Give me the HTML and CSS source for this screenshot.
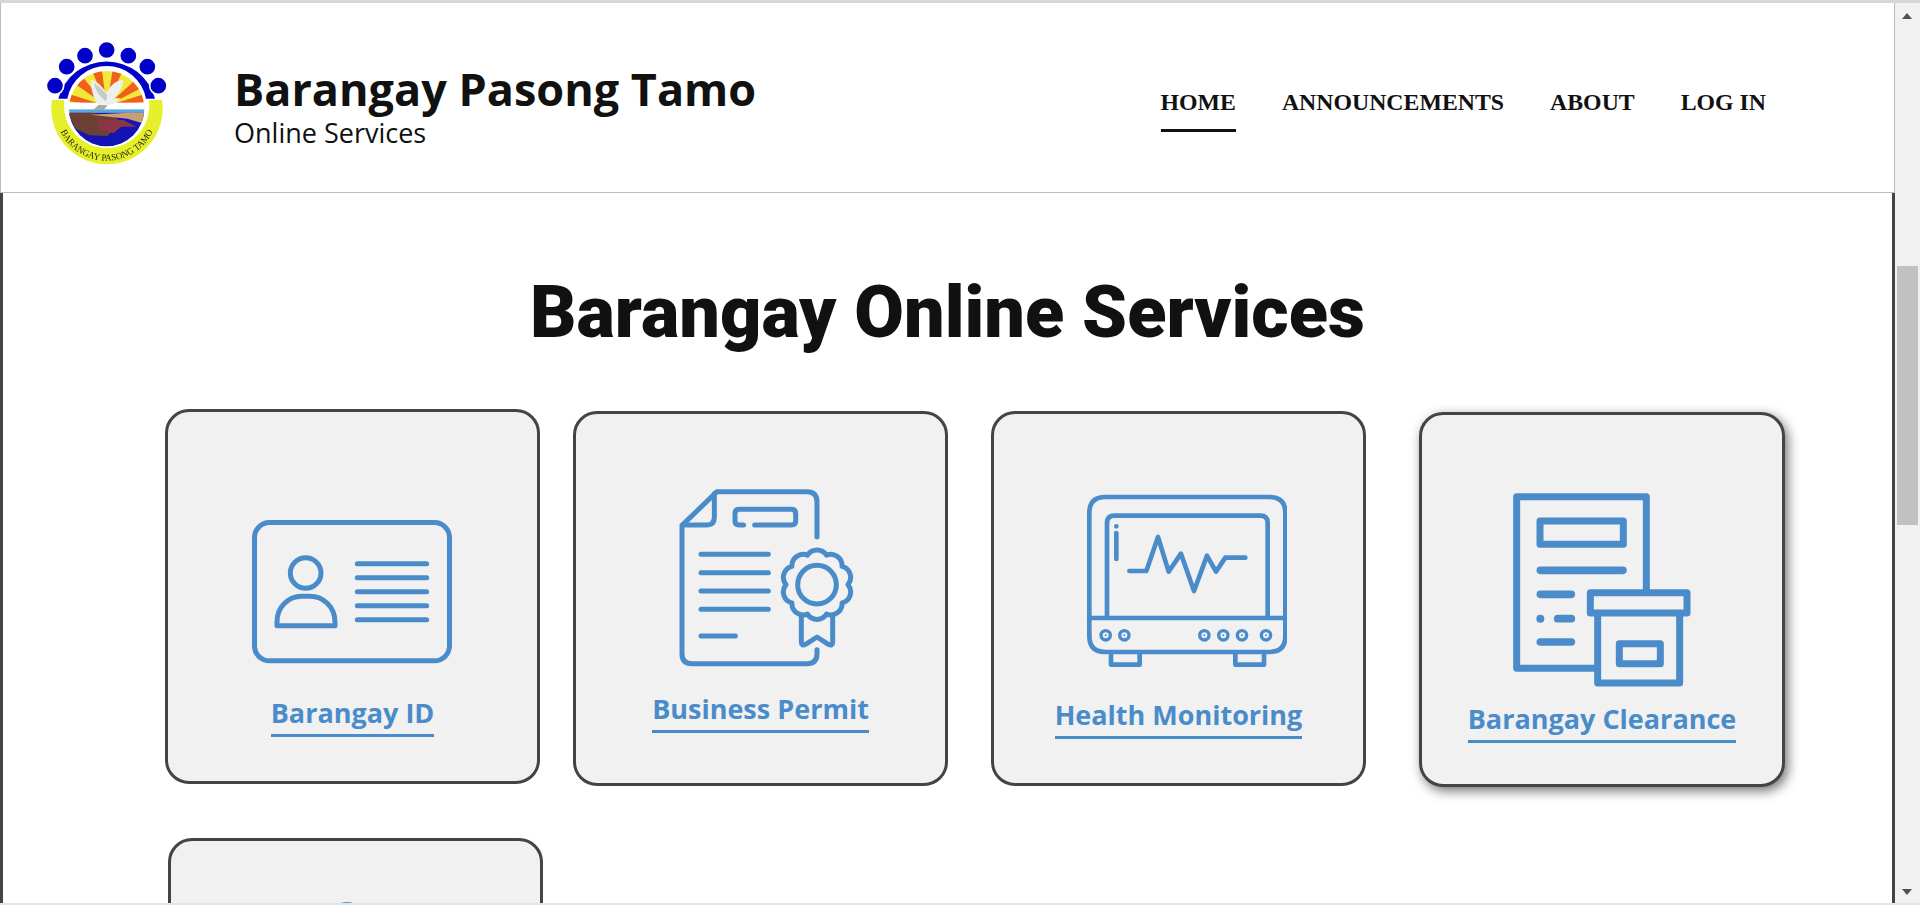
FILE: index.html
```html
<!DOCTYPE html>
<html lang="en">
<head>
<meta charset="utf-8">
<title>Barangay Pasong Tamo</title>
<link rel="stylesheet" href="styles.css">
</head>
<body>
<div class="topline"></div>
<div class="window">
  <div class="page">
    <header class="site-header">
      <svg class="logo" viewBox="0 0 450 450" aria-hidden="true">
        <defs>
          <clipPath id="disc"><circle cx="230" cy="236" r="113"/></clipPath>
          <path id="arc" d="M85 288A153 153 0 0 0 375 288"/>
        </defs>
        <path d="M66 210H103A128 128 0 1 0 357 210H396A167 167 0 1 1 66 210Z" fill="#e6f02a"/>
        <path d="M85 206A150 150 0 0 1 375 206L348 206A120 120 0 0 0 112 206Z" fill="#0000c8"/>
        <g fill="#0000c8" stroke="#fff" stroke-width="5">
          <circle cx="75" cy="167" r="26"/><circle cx="110" cy="110" r="26"/><circle cx="165" cy="77" r="26"/><circle cx="230" cy="60" r="26"/><circle cx="295" cy="77" r="26"/><circle cx="352" cy="110" r="26"/><circle cx="385" cy="167" r="26"/>
        </g>
        <g clip-path="url(#disc)">
          <rect x="110" y="115" width="240" height="125" fill="#f2e83a"/>
          <g fill="#f0601a">
            <path d="M230 228L116 192L116 214Z"/><path d="M230 228L150 132L130 158Z"/><path d="M230 228L182 112L214 108Z"/><path d="M230 228L250 108L280 118Z"/><path d="M230 228L320 146L338 172Z"/><path d="M230 228L344 192L346 216Z"/>
          </g>
          <rect x="110" y="218" width="240" height="22" fill="#fff"/>
          <rect x="110" y="238" width="240" height="10" fill="#5aa8e0"/>
          <rect x="110" y="248" width="240" height="107" fill="#1414b4"/>
          <path d="M112 248H185L255 262L290 286L258 292L232 318L178 316L136 296Z" fill="#6e4034"/>
          <path d="M182 254L296 248H346L338 280L292 266L236 260Z" fill="#c8a070"/>
          <path d="M200 270L280 270L320 290L274 290L250 310L208 298Z" fill="#8c3448"/>
        </g>
        <path d="M182 150C195 150 215 165 230 190C240 165 260 150 280 150C278 175 265 195 250 205L272 205L258 218L230 228L222 240L190 240L205 225C190 205 182 175 182 150Z" fill="#eef0ee"/>
        <path d="M190 240L205 225L232 226L222 240Z" fill="#a4aaa8"/>
        <path d="M192 160C198 185 212 205 228 214L232 196C220 180 205 168 192 160Z" fill="#c6cbc9"/>
        <text class="logo-text"><textPath href="#arc" startOffset="50%" textLength="345" lengthAdjust="spacingAndGlyphs">BARANGAY PASONG TAMO</textPath></text>
      </svg>
      <div class="brand">
        <div class="brand-name">Barangay Pasong Tamo</div>
        <div class="brand-sub">Online Services</div>
      </div>
      <nav class="nav">
        <a class="nav-link active">HOME</a>
        <a class="nav-link">ANNOUNCEMENTS</a>
        <a class="nav-link">ABOUT</a>
        <a class="nav-link">LOG IN</a>
      </nav>
    </header>
    <main class="content">
      <h1 class="title">Barangay Online Services</h1>
      <div class="row row-one">
        <section class="card card-id">
          <svg class="icon icon-id" viewBox="300 350 620 450" aria-hidden="true">
            <g fill="none" stroke="#4a8cca" stroke-width="15" stroke-linecap="round" stroke-linejoin="round">
              <rect x="313.5" y="366.5" width="585" height="415" rx="45"/>
              <circle cx="467" cy="518" r="46"/>
              <path d="M381 676H555V665C555 620 520 588 480 588H455C415 588 381 620 381 665Z"/>
              <path d="M622 490H830M622 532H830M622 574H830M622 616H830M622 658H830"/>
            </g>
          </svg>
          <a class="card-label">Barangay ID</a>
        </section>
        <section class="card card-permit">
          <svg class="icon icon-permit" viewBox="350 260 540 545" aria-hidden="true">
            <g fill="none" stroke="#4a8cca" stroke-width="15" stroke-linecap="round" stroke-linejoin="round">
              <path d="M770 410V304Q770 274 740 274H470L365 375V760Q365 790 395 790H740Q770 790 770 760V748"/>
              <path d="M462 280V350Q462 374 440 374H368"/>
              <path d="M550 374H537Q524 374 524 362V340Q524 327 537 327H693Q706 327 706 340V362Q706 374 693 374H583"/>
              <path d="M422 462H624M422 517H624M422 572H624M422 627H624M422 707H525"/>
              <path d="M798.7 464.6A34 34 0 0 1 845.2 498.3A34 34 0 0 1 863 553A34 34 0 0 1 845.2 607.7A34 34 0 0 1 798.7 641.4A34 34 0 0 1 741.3 641.4A34 34 0 0 1 694.8 607.7A34 34 0 0 1 677 553A34 34 0 0 1 694.8 498.3A34 34 0 0 1 741.3 464.6A34 34 0 0 1 798.7 464.6Z"/>
              <circle cx="770" cy="553" r="58"/>
              <path d="M723 645V725Q723 738 736 732L770 710L804 732Q817 738 817 725V645"/>
            </g>
          </svg>
          <a class="card-label">Business Permit</a>
        </section>
        <section class="card card-health">
          <svg class="icon icon-health" viewBox="320 280 600 525" aria-hidden="true">
            <g fill="none" stroke="#4a8cca" stroke-width="14" stroke-linecap="round" stroke-linejoin="round">
              <path d="M327 340Q327 292 375 292H867Q915 292 915 340V710Q915 757 867 757H375Q327 757 327 710Z"/>
              <path d="M380 650V370Q380 348 402 348H840Q862 348 862 370V650"/>
              <path d="M327 655H915"/>
              <path d="M408 400V478"/>
              <path d="M447 514H498L533 412L565 516L602 462L641 574L680 468L707 516L735 474H795"/>
              <path d="M392 760V795H478V760M765 760V795H851V760"/>
            </g>
            <circle cx="408" cy="380" r="7" fill="#4a8cca"/>
            <g fill="none" stroke="#4a8cca" stroke-width="10">
              <circle cx="376" cy="707" r="14"/><circle cx="432" cy="707" r="14"/><circle cx="672" cy="707" r="14"/><circle cx="729" cy="707" r="14"/><circle cx="785" cy="707" r="14"/><circle cx="857" cy="707" r="14"/>
            </g>
            <g fill="#4a8cca">
              <circle cx="376" cy="707" r="3"/><circle cx="432" cy="707" r="3"/><circle cx="672" cy="707" r="3"/><circle cx="729" cy="707" r="3"/><circle cx="785" cy="707" r="3"/><circle cx="857" cy="707" r="3"/>
            </g>
          </svg>
          <a class="card-label">Health Monitoring</a>
        </section>
        <section class="card card-clearance">
          <svg class="icon icon-clearance" viewBox="335 276 540 588" aria-hidden="true">
            <g fill="none" stroke="#4a8cca" stroke-width="21" stroke-linecap="round" stroke-linejoin="round">
              <path d="M738 575V290H349V805H590"/>
              <rect x="419" y="363" width="250" height="70"/>
              <rect x="570" y="578" width="290" height="61"/>
              <path d="M592 640V849H838V640"/>
              <rect x="657" y="731" width="123" height="60"/>
            </g>
            <g fill="none" stroke="#4a8cca" stroke-width="23" stroke-linecap="round">
              <path d="M420 511H668M420 583H513M472 656H513M420 726H513"/>
            </g>
            <circle cx="420" cy="656" r="12" fill="#4a8cca"/>
          </svg>
          <a class="card-label">Barangay Clearance</a>
        </section>
      </div>
      <div class="row row-two">
        <section class="card card-next">
          <svg class="icon icon-next" viewBox="0 0 60 60" aria-hidden="true">
            <circle cx="30" cy="22" r="18" fill="none" stroke="#4a8cca" stroke-width="4"/>
          </svg>
        </section>
      </div>
    </main>
  </div>
  <div class="scrollbar" aria-hidden="true">
    <div class="scroll-arrow up"></div>
    <div class="scroll-thumb"></div>
    <div class="scroll-arrow down"></div>
  </div>
</div>
<div class="bottomline"></div>
</body>
</html>
```

FILE: styles.css
```css
* { box-sizing: border-box; }
html, body { margin: 0; padding: 0; height: 905px; overflow: hidden; background: #fff; }
body { display: flex; flex-direction: column; }

.topline { height: 3px; background: #d6d6d6; flex: none; }
.bottomline { height: 2px; background: #e4e4e4; flex: none; }
.window { flex: 1; min-height: 0; display: flex; overflow: hidden; }
.page { flex: 1; min-width: 0; display: flex; flex-direction: column; overflow: hidden; }

.site-header {
  flex: none;
  height: 190px;
  display: flex;
  align-items: flex-start;
  border: 1px solid #bdbdbd;
  border-top: 0;
  background: #fff;
}
.logo { width: 150px; height: 150px; flex: none; margin: 27px 0 0 29px; filter: blur(.35px); }
.logo-text { font: 400 28px "Liberation Serif", serif; fill: #26260c; text-anchor: middle; }

.brand { margin: 58px 0 0 54px; color: #111; font-family: "Open Sans", sans-serif; }
.brand-name { font-size: 45px; font-weight: 700; line-height: 56px; }
.brand-sub { font-size: 27px; line-height: 32px; }

.nav { margin: 84px 0 0 auto; padding-right: 128px; display: flex; gap: 46px; }
.nav-link {
  font: 700 23.8px/30px "Liberation Serif", serif;
  color: #111;
  padding-bottom: 12px;
  border-bottom: 3px solid transparent;
}
.nav-link.active { border-bottom-color: #111; }

.content {
  flex: 1;
  min-height: 0;
  border-left: 3px solid #444;
  border-right: 3px solid #444;
  padding: 75px 0 0 162px;
}
.title {
  margin: 0 0 0 -162px;
  text-align: center;
  font: 900 72px/90px Roboto, sans-serif;
  color: #111;
}
.row { display: flex; align-items: flex-start; }
.row-one { margin-top: 51px; }
.row-two { margin-top: 51px; margin-left: 3px; }

.card {
  width: 375px;
  height: 375px;
  flex: none;
  display: flex;
  flex-direction: column;
  align-items: center;
  background: #f1f1f1;
  border: 3px solid #444;
  border-radius: 24px;
}
.card-permit { margin: 2px 0 0 33px; }
.card-health { margin: 2px 0 0 43px; }
.card-clearance { margin: 3px 0 0 53px; width: 366px; box-shadow: 3px 4px 12px rgba(0,0,0,.55); }

.icon { display: block; flex: none; filter: blur(.3px); }
.icon-id { width: 206.67px; height: 150px; margin: 104.67px 0 31.33px 1.67px; }
.icon-permit { width: 180px; height: 181.67px; margin: 72.67px 0 25.67px 12.33px; }
.icon-health { width: 200px; height: 175px; margin: 79.33px 0 31.67px 16.33px; }
.icon-clearance { width: 180px; height: 196px; margin: 77px 0 16px; }
.icon-next { width: 60px; height: 60px; margin: 59px 0 0 -18px; }

.card-label {
  font: 700 27px/30px "Open Sans", sans-serif;
  color: #4a8cca;
  padding-bottom: 6px;
  border-bottom: 3px solid #4a8cca;
}

.scrollbar { width: 25px; flex: none; background: #f1f1f1; position: relative; }
.scroll-thumb { position: absolute; left: 2px; right: 2px; top: 263px; height: 259px; background: #c1c1c1; }
.scroll-arrow { position: absolute; left: 7px; width: 0; height: 0; border-left: 5.5px solid transparent; border-right: 5.5px solid transparent; }
.scroll-arrow.up { top: 10px; border-bottom: 6px solid #505050; }
.scroll-arrow.down { bottom: 8px; border-top: 6px solid #505050; }
```
